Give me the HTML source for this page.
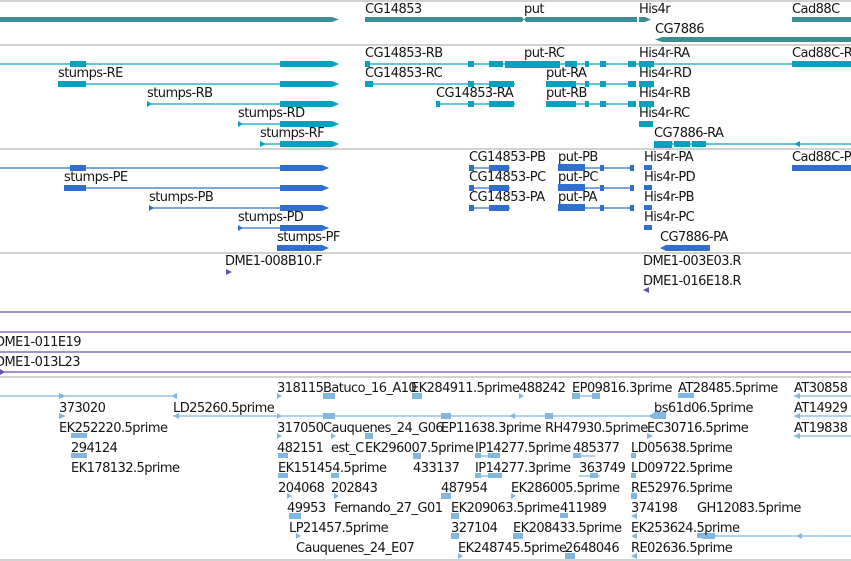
<!DOCTYPE html>
<html><head><meta charset="utf-8"><style>
html,body{margin:0;padding:0;background:#fff;width:851px;height:561px;overflow:hidden}
svg{display:block}
text{font-family:"DejaVu Sans","Liberation Sans",sans-serif;font-size:13px;letter-spacing:-0.55px;fill:#151515}
</style></head><body>
<svg width="851" height="561" xmlns="http://www.w3.org/2000/svg">
<g stroke="#c4c4c4" stroke-width="1.5">
<line x1="0" y1="1" x2="851" y2="1"/><line x1="0" y1="45" x2="851" y2="45"/>
<line x1="0" y1="149" x2="851" y2="149"/><line x1="0" y1="253" x2="851" y2="253"/>
<line x1="0" y1="377" x2="851" y2="377"/><line x1="0" y1="560" x2="851" y2="560"/>
</g>
<g fill="#3d8e94">
<polygon points="0,17 332,17 339,19.5 332,22 0,22"/>
<rect x="365" y="17" width="157" height="5"/>
<polygon points="522,17 524,19.5 526,17 637,17 637,22 526,22 524,19.5 522,22"/>
<polygon points="639,17 645,17 651,19.5 645,22 639,22"/>
<rect x="792" y="17" width="59" height="5"/>
<polygon points="655,39.5 662,37 851,37 851,42 662,42"/>
</g>
<text x="365" y="13">CG14853</text><text x="524" y="13">put</text><text x="639" y="13">His4r</text><text x="792" y="13">Cad88C</text>
<text x="655" y="33">CG7886</text>
<g stroke="#0aa0c0" stroke-width="1.2">
<line x1="0" y1="64" x2="338" y2="64"/><line x1="58" y1="84" x2="338" y2="84"/>
<line x1="147" y1="104" x2="338" y2="104"/><line x1="238" y1="124" x2="338" y2="124"/>
<line x1="260" y1="144" x2="338" y2="144"/>
<line x1="365" y1="64" x2="851" y2="64"/><line x1="365" y1="84" x2="515" y2="84"/>
<line x1="436" y1="104" x2="515" y2="104"/><line x1="546" y1="84" x2="634" y2="84"/>
<line x1="546" y1="104" x2="634" y2="104"/><line x1="654" y1="144" x2="851" y2="144"/>
</g>
<g fill="#0aa0c0">
<polygon points="280,61 332,61 339,64 332,67 280,67"/><polygon points="280,81 332,81 339,84 332,87 280,87"/>
<polygon points="280,101 332,101 339,104 332,107 280,107"/><polygon points="280,121 332,121 339,124 332,127 280,127"/>
<polygon points="280,141 332,141 339,144 332,147 280,147"/>
<polygon points="70,61 86,61 86,67 70,67"/><polygon points="58,81 86,81 86,87 58,87"/>
<polygon points="147,101 152,104 147,107"/><polygon points="238,121 243,124 238,127"/><polygon points="260,141 266,144 260,147"/>
<rect x="365" y="61" width="5" height="6"/><rect x="365" y="81" width="8" height="6"/><rect x="436" y="101" width="4" height="6"/>
<rect x="468" y="61" width="6" height="6"/><rect x="489" y="61" width="14" height="6"/><rect x="505" y="61" width="55" height="7"/><rect x="565" y="61" width="12" height="6"/><rect x="585" y="61" width="4" height="6"/><rect x="600" y="61" width="6" height="6"/><rect x="628" y="61" width="8" height="6"/>
<rect x="468" y="81" width="6" height="6"/><rect x="489" y="81" width="25" height="6"/>
<rect x="468" y="101" width="6" height="6"/><rect x="489" y="101" width="25" height="6"/>
<rect x="546" y="81" width="30" height="6"/><rect x="585" y="81" width="4" height="6"/><rect x="600" y="81" width="6" height="6"/><rect x="628" y="81" width="8" height="6"/>
<rect x="546" y="101" width="30" height="6"/><rect x="585" y="101" width="4" height="6"/><rect x="600" y="101" width="6" height="6"/><rect x="628" y="101" width="8" height="6"/>
<rect x="639" y="61" width="15" height="6"/><rect x="639" y="81" width="15" height="6"/><rect x="639" y="101" width="15" height="6"/><rect x="639" y="121" width="14" height="6"/>
<rect x="792" y="61" width="59" height="6"/>
<rect x="654" y="141" width="18" height="7"/><rect x="674" y="141" width="16" height="6"/><rect x="692" y="141" width="14" height="6"/>
<polygon points="794,144 800,141 800,147"/>
</g>
<text x="58" y="77">stumps-RE</text><text x="147" y="97">stumps-RB</text><text x="238" y="117">stumps-RD</text><text x="260" y="137">stumps-RF</text>
<text x="365" y="57">CG14853-RB</text><text x="365" y="77">CG14853-RC</text><text x="436" y="97">CG14853-RA</text>
<text x="524" y="57">put-RC</text><text x="546" y="77">put-RA</text><text x="546" y="97">put-RB</text>
<text x="639" y="57">His4r-RA</text><text x="639" y="77">His4r-RD</text><text x="639" y="97">His4r-RB</text><text x="639" y="117">His4r-RC</text>
<text x="654" y="137">CG7886-RA</text><text x="792" y="57">Cad88C-R</text>
<g stroke="#2f6fd0" stroke-width="1.2">
<line x1="0" y1="168" x2="328" y2="168"/><line x1="64" y1="188" x2="328" y2="188"/>
<line x1="149" y1="208" x2="328" y2="208"/><line x1="238" y1="228" x2="328" y2="228"/>
<line x1="469" y1="168" x2="510" y2="168"/><line x1="469" y1="188" x2="510" y2="188"/><line x1="469" y1="208" x2="510" y2="208"/>
<line x1="558" y1="168" x2="634" y2="168"/><line x1="558" y1="188" x2="634" y2="188"/><line x1="558" y1="208" x2="634" y2="208"/>
<line x1="792" y1="168" x2="851" y2="168"/>
</g>
<g fill="#2f6fd0">
<polygon points="280,165 322,165 329,168 322,171 280,171"/><polygon points="280,185 322,185 329,188 322,191 280,191"/>
<polygon points="280,205 322,205 329,208 322,211 280,211"/><polygon points="280,225 322,225 329,228 322,231 280,231"/>
<polygon points="277,245 322,245 329,248 322,251 277,251"/>
<rect x="70" y="165" width="16" height="6"/><rect x="64" y="185" width="22" height="6"/>
<polygon points="149,205 154,208 149,211"/><polygon points="238,225 243,228 238,231"/>
<rect x="469" y="165" width="5" height="6"/><rect x="489" y="165" width="20" height="6"/>
<rect x="469" y="185" width="5" height="6"/><rect x="489" y="185" width="20" height="6"/>
<rect x="469" y="205" width="5" height="6"/><rect x="489" y="205" width="20" height="6"/>
<rect x="558" y="164" width="27" height="7"/><rect x="600" y="165" width="4" height="6"/><rect x="630" y="165" width="4" height="6"/>
<rect x="558" y="184" width="27" height="7"/><rect x="600" y="185" width="4" height="6"/><rect x="630" y="185" width="4" height="6"/>
<rect x="558" y="204" width="27" height="7"/><rect x="600" y="205" width="4" height="6"/><rect x="630" y="205" width="4" height="6"/>
<rect x="644" y="165" width="8" height="5"/><rect x="644" y="185" width="8" height="5"/><rect x="644" y="205" width="8" height="5"/><rect x="644" y="225" width="8" height="5"/>
<rect x="792" y="165" width="59" height="6"/>
<polygon points="660,248 666,245 710,245 710,251 666,251"/>
</g>
<text x="64" y="181">stumps-PE</text><text x="149" y="201">stumps-PB</text><text x="238" y="221">stumps-PD</text><text x="277" y="241">stumps-PF</text>
<text x="469" y="161">CG14853-PB</text><text x="469" y="181">CG14853-PC</text><text x="469" y="201">CG14853-PA</text>
<text x="558" y="161">put-PB</text><text x="558" y="181">put-PC</text><text x="558" y="201">put-PA</text>
<text x="644" y="161">His4r-PA</text><text x="644" y="181">His4r-PD</text><text x="644" y="201">His4r-PB</text><text x="644" y="221">His4r-PC</text>
<text x="660" y="241">CG7886-PA</text><text x="792" y="161">Cad88C-P</text>
<text x="225" y="265">DME1-008B10.F</text><text x="643" y="265">DME1-003E03.R</text><text x="643" y="285">DME1-016E18.R</text>
<g fill="#6a4fb0"><polygon points="226,269 232,272 226,275"/><polygon points="643,290 649,287 649,293"/><polygon points="0,369 5,372 0,375"/></g>
<g stroke="#6a4fb0" stroke-width="1.3">
<line x1="0" y1="312" x2="851" y2="312"/><line x1="0" y1="332" x2="851" y2="332"/>
<line x1="0" y1="352" x2="851" y2="352"/><line x1="0" y1="372" x2="851" y2="372"/>
</g>
<text x="-5" y="346">DME1-011E19</text><text x="-5" y="366">DME1-013L23</text>
<g stroke="#80b8e0" stroke-width="1.2">
<line x1="0" y1="396" x2="176" y2="396"/><line x1="173" y1="416" x2="660" y2="416"/>
<line x1="794" y1="396" x2="851" y2="396"/><line x1="794" y1="416" x2="851" y2="416"/><line x1="794" y1="436" x2="851" y2="436"/>
<line x1="697" y1="536" x2="851" y2="536"/>
<line x1="572" y1="396" x2="600" y2="396"/><line x1="475" y1="456" x2="500" y2="456"/><line x1="475" y1="476" x2="500" y2="476"/>
<line x1="573" y1="456" x2="595" y2="456"/><line x1="579" y1="476" x2="600" y2="476"/>
</g>
<g fill="#80b8e0">
<polygon points="171,396 177,393 177,399"/><polygon points="173,416 179,413 179,419"/><polygon points="509,416 515,413 515,419"/>
<polygon points="648,416 654,413 654,419"/><rect x="654" y="412" width="12" height="7"/>
<polygon points="794,396 800,393 800,399"/><polygon points="794,416 800,413 800,419"/><polygon points="794,436 800,433 800,439"/>
<polygon points="697,536 703,533 715,533 715,539 703,539"/><polygon points="796,536 802,533 802,539"/>
<polygon points="59,393 66,396 59,399"/><polygon points="59,413 66,416 59,419"/><rect x="71" y="433" width="16" height="5"/><rect x="71" y="453" width="16" height="5"/>
<polygon points="277,393 282,396 277,399"/><rect x="323" y="393" width="12" height="6"/><rect x="412" y="393" width="10" height="6"/><polygon points="519,393 524,396 519,399"/>
<rect x="572" y="393" width="8" height="6"/><rect x="592" y="393" width="8" height="6"/><rect x="678" y="393" width="16" height="5"/>
<polygon points="277,413 282,416 277,419"/><rect x="323" y="413" width="12" height="6"/><rect x="441" y="413" width="10" height="6"/><rect x="545" y="413" width="8" height="6"/><polygon points="647,433 653,436 647,439"/>
<polygon points="277,433 282,436 277,439"/><polygon points="331,433 336,436 331,439"/><rect x="365" y="433" width="8" height="6"/><rect x="475" y="453" width="6" height="5"/><rect x="488" y="453" width="12" height="5"/><rect x="573" y="453" width="8" height="5"/><rect x="631" y="453" width="5" height="5"/>
<rect x="278" y="453" width="10" height="5"/><rect x="413" y="453" width="8" height="6"/><rect x="475" y="473" width="6" height="5"/><rect x="488" y="473" width="14" height="5"/><rect x="590" y="473" width="8" height="5"/><rect x="631" y="473" width="5" height="5"/>
<rect x="278" y="473" width="10" height="5"/><rect x="331" y="473" width="8" height="5"/><rect x="441" y="493" width="10" height="6"/><polygon points="511,493 516,496 511,499"/><rect x="631" y="493" width="6" height="6"/>
<polygon points="287,493 292,496 287,499"/><polygon points="334,493 339,496 334,499"/><rect x="451" y="513" width="8" height="6"/><rect x="560" y="513" width="8" height="5"/><polygon points="631,516 637,513 637,519"/><rect x="697" y="533" width="10" height="5"/>
<rect x="289" y="513" width="12" height="6"/><rect x="451" y="533" width="8" height="6"/><rect x="513" y="533" width="10" height="6"/><polygon points="631,536 637,533 637,539"/>
<polygon points="296,533 301,536 296,539"/><polygon points="458,553 463,556 458,559"/><rect x="565" y="553" width="10" height="6"/><polygon points="631,556 637,553 637,559"/>
</g>
<g>
<text x="277" y="392">318115</text><text x="323" y="392">Batuco_16_A10</text><text x="411" y="392">EK284911.5prime</text><text x="519" y="392">488242</text><text x="572" y="392">EP09816.3prime</text><text x="678" y="392">AT28485.5prime</text><text x="794" y="392">AT30858</text>
<text x="59" y="412">373020</text><text x="173" y="412">LD25260.5prime</text><text x="654" y="412">bs61d06.5prime</text><text x="794" y="412">AT14929</text>
<text x="59" y="432">EK252220.5prime</text><text x="277" y="432">317050</text><text x="323" y="432">Cauquenes_24_G06</text><text x="441" y="432">EP11638.3prime</text><text x="545" y="432">RH47930.5prime</text><text x="647" y="432">EC30716.5prime</text><text x="794" y="432">AT19838</text>
<text x="71" y="452">294124</text><text x="277" y="452">482151</text><text x="331" y="452">est_C</text><text x="365" y="452">EK296007.5prime</text><text x="475" y="452">IP14277.5prime</text><text x="573" y="452">485377</text><text x="631" y="452">LD05638.5prime</text>
<text x="71" y="472">EK178132.5prime</text><text x="278" y="472">EK151454.5prime</text><text x="413" y="472">433137</text><text x="475" y="472">IP14277.3prime</text><text x="579" y="472">363749</text><text x="631" y="472">LD09722.5prime</text>
<text x="278" y="492">204068</text><text x="331" y="492">202843</text><text x="441" y="492">487954</text><text x="511" y="492">EK286005.5prime</text><text x="631" y="492">RE52976.5prime</text>
<text x="287" y="512">49953</text><text x="334" y="512">Fernando_27_G01</text><text x="451" y="512">EK209063.5prime</text><text x="560" y="512">411989</text><text x="631" y="512">374198</text><text x="697" y="512">GH12083.5prime</text>
<text x="289" y="532">LP21457.5prime</text><text x="451" y="532">327104</text><text x="513" y="532">EK208433.5prime</text><text x="631" y="532">EK253624.5prime</text>
<text x="296" y="552">Cauquenes_24_E07</text><text x="458" y="552">EK248745.5prime</text><text x="565" y="552">2648046</text><text x="631" y="552">RE02636.5prime</text>
</g>
</svg>
</body></html>
